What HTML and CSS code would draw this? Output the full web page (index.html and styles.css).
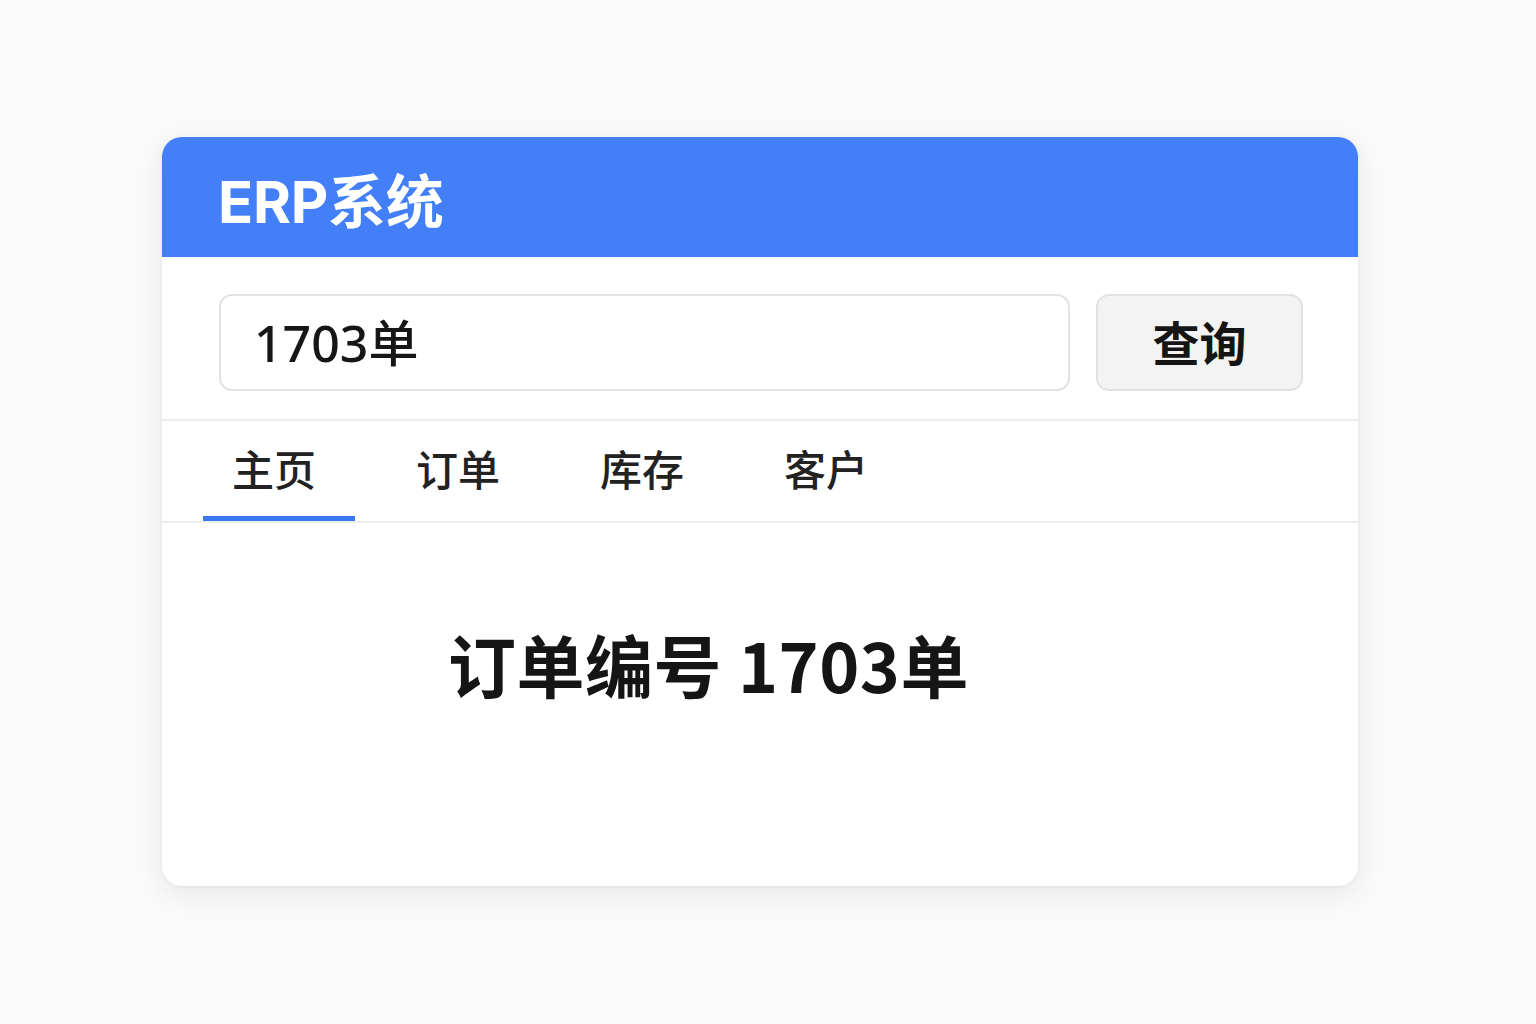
FILE: index.html
```html
<!DOCTYPE html>
<html lang="zh-CN">
<head>
<meta charset="utf-8">
<title>ERP系统</title>
<link rel="stylesheet" href="styles.css">
</head>
<body>
<div class="page">
  <div class="card">
    <header class="card-header">
      <h1 class="title">ERP系统</h1>
    </header>
    <div class="search-row">
      <div class="search-input">1703单</div>
      <button class="search-btn">查询</button>
    </div>
    <nav class="tabs">
      <div class="tab active">主页</div>
      <div class="tab">订单</div>
      <div class="tab">库存</div>
      <div class="tab">客户</div>
    </nav>
    <main class="content">
      <div class="result">订单编号 1703单</div>
    </main>
  </div>
</div>
</body>
</html>
```

FILE: styles.css
```css
* { box-sizing: border-box; }
html, body {
  margin: 0;
  padding: 0;
  background: #fafafa;
  font-family: "Noto Sans", "Noto Sans CJK SC", sans-serif;
  color: #1b1b1b;
}
.page {
  width: 1536px;
  height: 1024px;
  padding-top: 137px;
  padding-left: 162px;
}
.card {
  width: 1196px;
  height: 749px;
  background: #ffffff;
  border-radius: 20px;
  overflow: hidden;
  box-shadow: 0 8px 30px rgba(0, 0, 0, 0.08), 0 1px 4px rgba(0, 0, 0, 0.05);
  display: flex;
  flex-direction: column;
}
.card-header {
  height: 120px;
  background: #427ff8;
  display: flex;
  align-items: center;
  padding-left: 56px;
  flex: none;
}
.title {
  margin: 0;
  color: #ffffff;
  font-family: Inter, "Noto Sans CJK SC", sans-serif;
  font-weight: 700;
  font-size: 58px;
  line-height: 1;
  letter-spacing: -0.3px;
  padding-top: 10px;
}
.search-row {
  height: 164px;
  flex: none;
  display: flex;
  align-items: flex-start;
  padding: 37px 55px 0 57px;
  gap: 26px;
  border-bottom: 2px solid #eeeeee;
}
.search-input {
  flex: 1;
  height: 97px;
  border: 2px solid #e2e2e2;
  border-radius: 13px;
  background: #fff;
  display: flex;
  align-items: center;
  padding-left: 33px;
  padding-bottom: 4px;
  font-size: 50px;
  font-weight: 500;
  color: #161616;
  font-family: "Noto Sans", "Noto Sans CJK SC", sans-serif;
}
.search-btn {
  width: 207px;
  height: 97px;
  border: 2px solid #e2e2e2;
  border-radius: 13px;
  background: #f3f3f3;
  font-family: "Noto Sans CJK SC", sans-serif;
  font-size: 47px;
  font-weight: 700;
  color: #151515;
  padding: 0;
  padding-bottom: 4px;
}
.tabs {
  height: 102px;
  flex: none;
  display: flex;
  padding-left: 41px;
  gap: 32px;
  border-bottom: 2px solid #eeeeee;
}
.tab {
  width: 152px;
  display: flex;
  align-items: center;
  justify-content: center;
  font-family: "Noto Sans CJK SC", sans-serif;
  font-size: 42px;
  font-weight: 500;
  color: #222222;
  padding-bottom: 2px;
  padding-right: 10px;
  border-bottom: 5px solid transparent;
}
.tab.active {
  border-bottom-color: #3b78f0;
}
.content {
  flex: 1;
  padding-top: 100px;
  padding-left: 286px;
}
.result {
  font-family: "Noto Sans CJK SC", sans-serif;
  font-size: 68px;
  font-weight: 700;
  color: #151515;
  line-height: 1.2;
  letter-spacing: 0.5px;
}
```
